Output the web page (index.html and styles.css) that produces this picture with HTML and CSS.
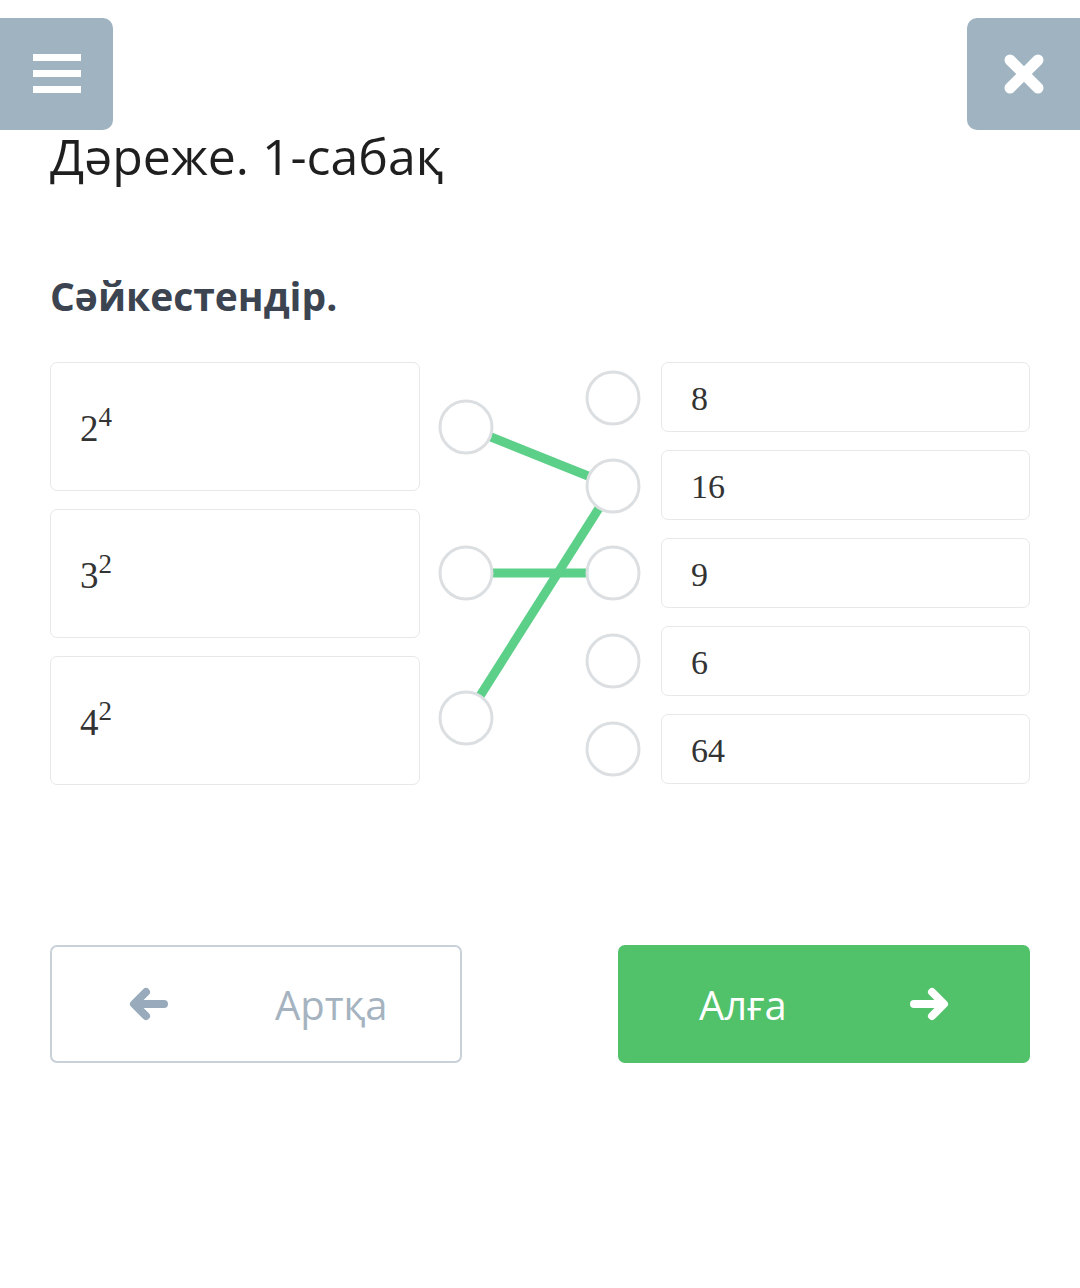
FILE: index.html
```html
<!DOCTYPE html>
<html lang="kk">
<head>
    <meta charset="UTF-8">
    <meta name="viewport" content="width=device-width, initial-scale=1.0">
    <title>Дәреже. 1-сабақ</title>
    <link rel="stylesheet" href="styles.css">
</head>
<body>
    <div class="topbar">
        <button class="icon-btn menu-btn" aria-label="Мәзір">
            <svg width="52" height="44" viewBox="0 0 52 44">
                <rect x="2" y="2" width="48" height="7" fill="#fff"/>
                <rect x="2" y="18" width="48" height="7" fill="#fff"/>
                <rect x="2" y="34" width="48" height="7" fill="#fff"/>
            </svg>
        </button>
        <button class="icon-btn close-btn" aria-label="Жабу">
            <svg width="44" height="44" viewBox="0 0 44 44">
                <path d="M8 8 L36 36 M36 8 L8 36" stroke="#fff" stroke-width="11" stroke-linecap="round"/>
            </svg>
        </button>
    </div>

    <div class="container">
        <h1 class="lesson-title">Дәреже. 1-сабақ</h1>
        <h2 class="task">Сәйкестендір.</h2>

        <div class="match">
            <div class="left-col">
                <div class="card card-tall"><span class="math">2<sup>4</sup></span></div>
                <div class="card card-tall"><span class="math">3<sup>2</sup></span></div>
                <div class="card card-tall"><span class="math">4<sup>2</sup></span></div>
            </div>

            <svg class="links" width="241" height="423" viewBox="0 0 241 423">
                <g stroke="#5ccf88" stroke-width="9">
                    <line x1="46" y1="65" x2="193" y2="124"/>
                    <line x1="46" y1="211" x2="193" y2="211"/>
                    <line x1="46" y1="356" x2="193" y2="124"/>
                </g>
                <g fill="#fff" stroke="#dcdfe2" stroke-width="3">
                    <circle cx="46" cy="65" r="26"/>
                    <circle cx="46" cy="211" r="26"/>
                    <circle cx="46" cy="356" r="26"/>
                    <circle cx="193" cy="36" r="26"/>
                    <circle cx="193" cy="124" r="26"/>
                    <circle cx="193" cy="211" r="26"/>
                    <circle cx="193" cy="299" r="26"/>
                    <circle cx="193" cy="387" r="26"/>
                </g>
            </svg>

            <div class="right-col">
                <div class="card card-short"><span class="math">8</span></div>
                <div class="card card-short"><span class="math">16</span></div>
                <div class="card card-short"><span class="math">9</span></div>
                <div class="card card-short"><span class="math">6</span></div>
                <div class="card card-short"><span class="math">64</span></div>
            </div>
        </div>

        <div class="nav">
            <button class="nav-btn back-btn">
                <svg width="40" height="34" viewBox="0 0 40 34">
                    <path d="M36 17 H8 M18 5 L6 17 L18 29" fill="none" stroke="#98aabb" stroke-width="8" stroke-linecap="round" stroke-linejoin="round"/>
                </svg>
                <span>Артқа</span>
            </button>
            <button class="nav-btn next-btn">
                <span>Алға</span>
                <svg width="40" height="34" viewBox="0 0 40 34">
                    <path d="M4 17 H32 M22 5 L34 17 L22 29" fill="none" stroke="#fff" stroke-width="8" stroke-linecap="round" stroke-linejoin="round"/>
                </svg>
            </button>
        </div>
    </div>
</body>
</html>
```

FILE: styles.css
```css
body {
    margin: 0;
    background: #fff;
    font-family: "Open Sans", "Noto Sans", sans-serif;
    overflow: hidden;
}

.topbar {
    display: flex;
    justify-content: space-between;
    margin: 18px -12px 0;
}

.icon-btn {
    width: 125px;
    height: 112px;
    border: none;
    border-radius: 10px;
    background: #9fb3c1;
    display: flex;
    align-items: center;
    justify-content: center;
    padding: 0;
}

.menu-btn {
    padding-left: 12px;
}

.close-btn {
    padding-right: 12px;
}

.container {
    padding: 0 50px;
}

.lesson-title {
    margin: -2px 0 0;
    font-size: 50px;
    font-weight: 400;
    line-height: 56px;
    color: #1f1f1f;
}

.task {
    margin: 90px 0 0;
    font-size: 39px;
    font-weight: 700;
    line-height: 44px;
    color: #3b4450;
}

.match {
    display: flex;
    align-items: flex-start;
    margin-top: 44px;
}

.left-col,
.right-col {
    display: flex;
    flex-direction: column;
    gap: 18px;
}

.left-col {
    width: 370px;
}

.right-col {
    width: 369px;
}

.card {
    box-sizing: border-box;
    border: 1.5px solid #e6e8ea;
    border-radius: 7px;
    display: flex;
    align-items: center;
    padding: 4px 0 0 29px;
    color: #333;
}

.card-tall {
    height: 129px;
}

.card-short {
    height: 70px;
}

.math {
    font-family: "Liberation Serif", "DejaVu Serif", serif;
    font-size: 37px;
}

.card-short .math {
    font-size: 34px;
}

.math sup {
    font-size: 27px;
    vertical-align: 15px;
    line-height: 0;
}

.links {
    display: block;
    flex-shrink: 0;
}

.nav {
    display: flex;
    justify-content: space-between;
    margin-top: 160px;
}

.nav-btn {
    box-sizing: border-box;
    width: 412px;
    height: 118px;
    border-radius: 7px;
    display: flex;
    align-items: center;
    font-family: "Open Sans", "Noto Sans", sans-serif;
    font-size: 40px;
}

.back-btn {
    background: #fff;
    border: 2px solid #c9d0d7;
    color: #a5b3c0;
    padding: 0 0 0 76px;
    gap: 107px;
}

.next-btn {
    background: #51c16a;
    border: none;
    color: #fff;
    padding: 0 0 0 81px;
    gap: 123px;
}
```
